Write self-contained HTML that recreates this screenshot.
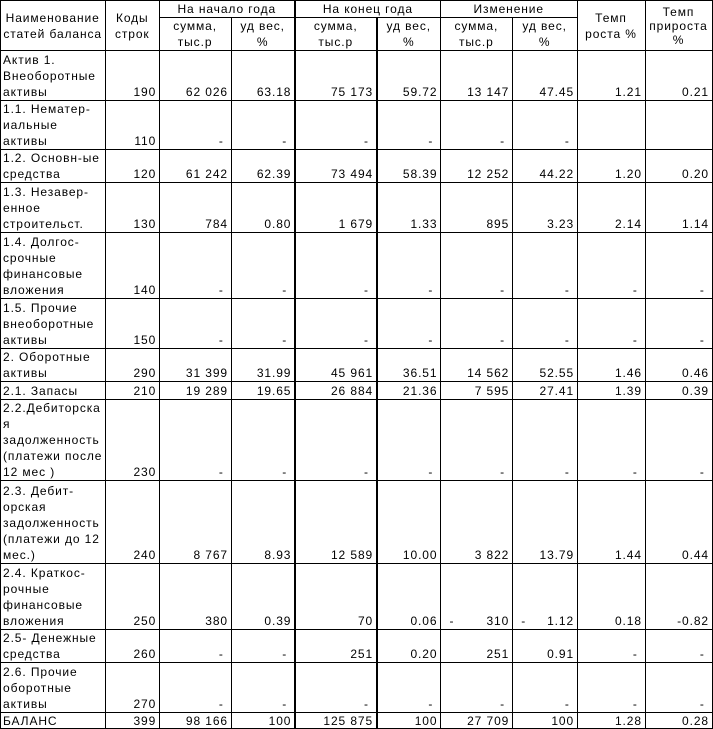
<!DOCTYPE html>
<html><head><meta charset="utf-8"><style>
html,body{margin:0;padding:0;background:#fff;}
body{width:713px;height:726px;overflow:hidden;}
table{border-collapse:collapse;table-layout:fixed;position:absolute;left:0;top:0;font-family:"Liberation Sans",Arial,sans-serif;font-size:12px;letter-spacing:0.9px;color:#000;}
td{border:1px solid #000;padding:0 3px 0 2px;vertical-align:bottom;text-align:right;line-height:16px;white-space:nowrap;overflow:hidden;}
td.l{text-align:left;}
td.c{text-align:center;vertical-align:middle;}
.tk{border-left:2px solid #000;}
</style></head><body>
<table>
<colgroup><col style="width:104px"><col style="width:54px"><col style="width:72px"><col style="width:64px"><col style="width:82px"><col style="width:64px"><col style="width:72px"><col style="width:65px"><col style="width:68px"><col style="width:67px"></colgroup>
<tr style="height:17px"><td class="c" rowspan="2">Наименование<br>статей баланса</td><td class="c" rowspan="2">Коды<br>строк</td><td class="c" colspan="2" style="line-height:14px">На начало года</td><td class="c tk" colspan="2" style="line-height:14px">На конец года</td><td class="c" colspan="2" style="line-height:14px">Изменение</td><td class="c" rowspan="2">Темп<br>роста %</td><td class="c" rowspan="2" style="line-height:14px">Темп<br>прироста<br>%</td></tr>
<tr style="height:32px"><td class="c">сумма,<br>тыс.р</td><td class="c">уд вес,<br>%</td><td class="c tk">сумма,<br>тыс.р</td><td class="c tk">уд вес,<br>%</td><td class="c">сумма,<br>тыс.р</td><td class="c">уд вес,<br>%</td></tr>
<tr style="height:50px"><td class="l">Актив 1.<br>Внеоборотные<br>активы</td><td>190</td><td>62 026</td><td>63.18</td><td class="tk">75 173</td><td class="tk">59.72</td><td>13 147</td><td>47.45</td><td>1.21</td><td>0.21</td></tr>
<tr style="height:49px"><td class="l">1.1. Нематер-<br>иальные<br>активы</td><td>110</td><td>-&nbsp;</td><td>-&nbsp;</td><td class="tk">-&nbsp;</td><td class="tk">-&nbsp;</td><td>-&nbsp;</td><td>-&nbsp;</td><td></td><td></td></tr>
<tr style="height:33px"><td class="l">1.2. Основн-ые<br>средства</td><td>120</td><td>61 242</td><td>62.39</td><td class="tk">73 494</td><td class="tk">58.39</td><td>12 252</td><td>44.22</td><td>1.20</td><td>0.20</td></tr>
<tr style="height:50px"><td class="l">1.3. Незавер-<br>енное<br>строительст.</td><td>130</td><td>784</td><td>0.80</td><td class="tk">1 679</td><td class="tk">1.33</td><td>895</td><td>3.23</td><td>2.14</td><td>1.14</td></tr>
<tr style="height:66px"><td class="l">1.4. Долгос-<br>срочные<br>финансовые<br>вложения</td><td>140</td><td>-&nbsp;</td><td>-&nbsp;</td><td class="tk">-&nbsp;</td><td class="tk">-&nbsp;</td><td>-&nbsp;</td><td>-&nbsp;</td><td>-&nbsp;</td><td>-&nbsp;</td></tr>
<tr style="height:50px"><td class="l">1.5. Прочие<br>внеоборотные<br>активы</td><td>150</td><td>-&nbsp;</td><td>-&nbsp;</td><td class="tk">-&nbsp;</td><td class="tk">-&nbsp;</td><td>-&nbsp;</td><td>-&nbsp;</td><td>-&nbsp;</td><td>-&nbsp;</td></tr>
<tr style="height:33px"><td class="l">2. Оборотные<br>активы</td><td>290</td><td>31 399</td><td>31.99</td><td class="tk">45 961</td><td class="tk">36.51</td><td>14 562</td><td>52.55</td><td>1.46</td><td>0.46</td></tr>
<tr style="height:18px"><td class="l">2.1. Запасы</td><td>210</td><td>19 289</td><td>19.65</td><td class="tk">26 884</td><td class="tk">21.36</td><td>7 595</td><td>27.41</td><td>1.39</td><td>0.39</td></tr>
<tr style="height:81px"><td class="l">2.2.Дебиторска<br>я<br>задолженность<br>(платежи после<br>12 мес )</td><td>230</td><td>-&nbsp;</td><td>-&nbsp;</td><td class="tk">-&nbsp;</td><td class="tk">-&nbsp;</td><td>-&nbsp;</td><td>-&nbsp;</td><td>-&nbsp;</td><td>-&nbsp;</td></tr>
<tr style="height:83px"><td class="l">2.3. Дебит-<br>орская<br>задолженность<br>(платежи до 12<br>мес.)</td><td>240</td><td>8 767</td><td>8.93</td><td class="tk">12 589</td><td class="tk">10.00</td><td>3 822</td><td>13.79</td><td>1.44</td><td>0.44</td></tr>
<tr style="height:66px"><td class="l">2.4. Краткос-<br>рочные<br>финансовые<br>вложения</td><td>250</td><td>380</td><td>0.39</td><td class="tk">70</td><td class="tk">0.06</td><td><span style="float:left;padding-left:6px">-</span>310</td><td><span style="float:left;padding-left:6px">-</span>1.12</td><td>0.18</td><td>-0.82</td></tr>
<tr style="height:33px"><td class="l">2.5- Денежные<br>средства</td><td>260</td><td>-&nbsp;</td><td>-&nbsp;</td><td class="tk">251</td><td class="tk">0.20</td><td>251</td><td>0.91</td><td>-&nbsp;</td><td>-&nbsp;</td></tr>
<tr style="height:50px"><td class="l">2.6. Прочие<br>оборотные<br>активы</td><td>270</td><td>-&nbsp;</td><td>-&nbsp;</td><td class="tk">-&nbsp;</td><td class="tk">-&nbsp;</td><td>-&nbsp;</td><td>-&nbsp;</td><td>-&nbsp;</td><td>-&nbsp;</td></tr>
<tr style="height:16px"><td class="l" style="line-height:14px">БАЛАНС</td><td style="line-height:14px">399</td><td style="line-height:14px">98 166</td><td style="line-height:14px">100</td><td class="tk" style="line-height:14px">125 875</td><td class="tk" style="line-height:14px">100</td><td style="line-height:14px">27 709</td><td style="line-height:14px">100</td><td style="line-height:14px">1.28</td><td style="line-height:14px">0.28</td></tr>
</table>
</body></html>
